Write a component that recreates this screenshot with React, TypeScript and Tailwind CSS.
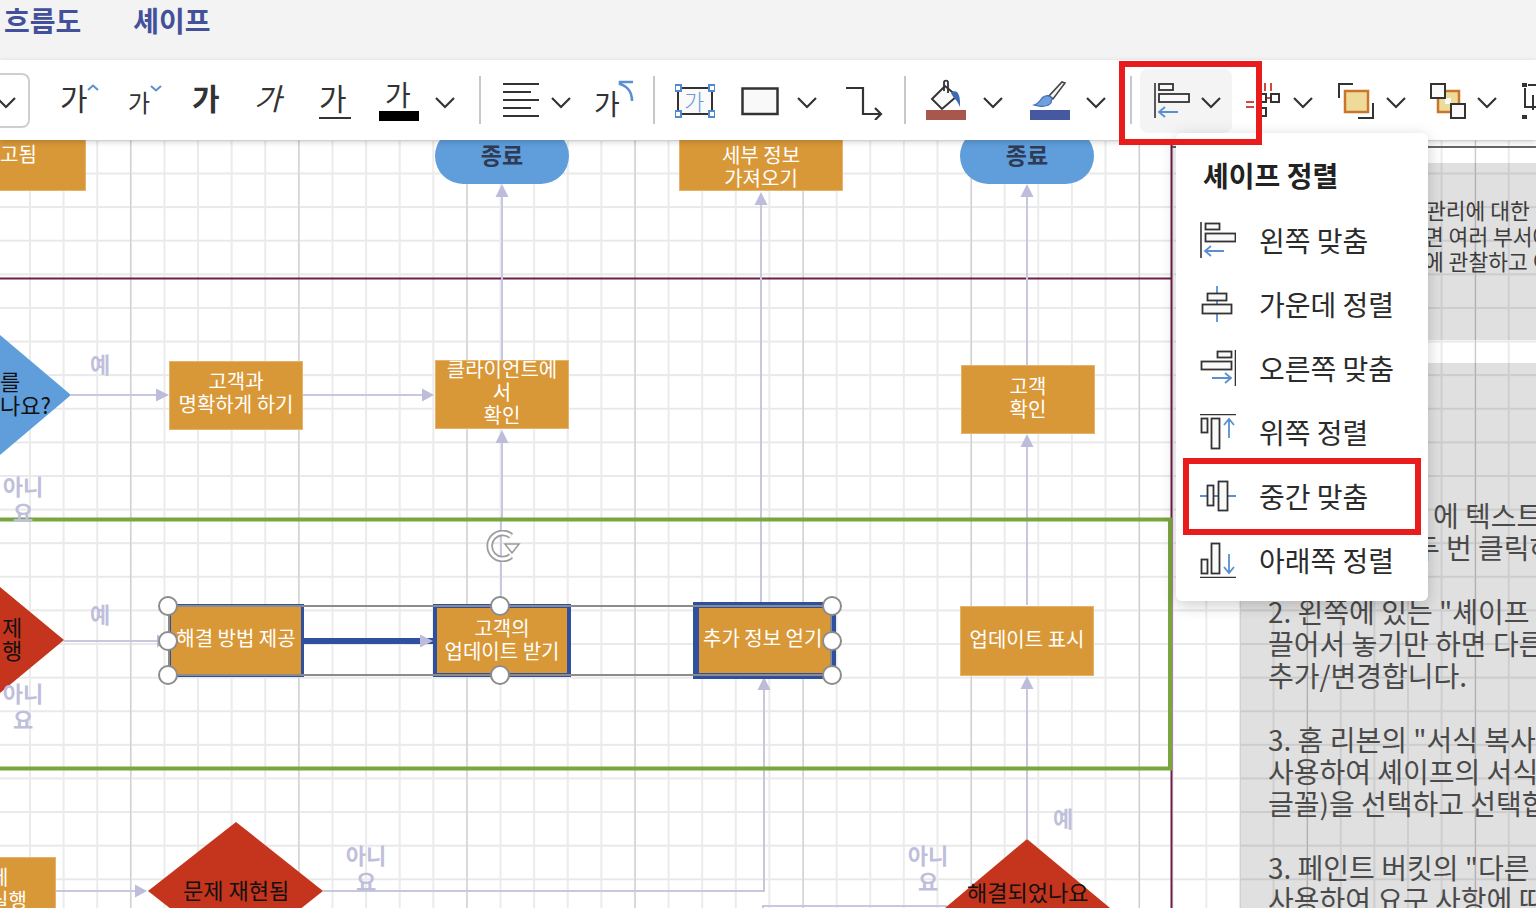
import type { ReactNode } from 'react';

const textDark = 'text-[#333]';

function Chevron({ className = '' }: { className?: string }) {
  return (
    <svg viewBox="0 0 20 40" className={`h-[40px] w-[20px] shrink-0 ${className}`}>
      <polyline points="1,18 10,27 19,18" fill="none" stroke="#333" strokeWidth="2.2" />
    </svg>
  );
}

function Sep({ className = '' }: { className?: string }) {
  return <div className={`h-[48px] w-[2px] shrink-0 bg-[#c8c8c8] ${className}`} />;
}

// edge is the border, plain boxes have a thin light one and selected ones a blue one
function Box({ className, edge = 'border border-[#e6b36c]', children }: { className: string; edge?: string; children: ReactNode }) {
  return (
    <div className={`absolute flex items-center justify-center bg-[#d99837] text-center text-[20px] leading-[23px] text-white ${edge} ${className}`}>
      {children}
    </div>
  );
}

function Handle({ className }: { className: string }) {
  return <div className={`absolute h-[20px] w-[20px] rounded-full border-2 border-[#8c8c8c] bg-white ${className}`} />;
}

function DiagramLabel({ className, children }: { className: string; children: ReactNode }) {
  return <div className={`absolute text-center text-[22px] leading-[26px] font-bold text-[#bfbfdc] ${className}`}>{children}</div>;
}

function MenuItem({ label, children }: { label: string; children: ReactNode }) {
  return (
    <div className="flex h-[64px] items-center gap-[23px] pl-[24px]">
      <svg viewBox="0 0 36 36" className="h-[36px] w-[36px] shrink-0">
        {children}
      </svg>
      <span className="text-[28px] leading-[36px] whitespace-nowrap text-[#2b2b2b]">{label}</span>
    </div>
  );
}

function Toolbar() {
  return (
    <div className="relative z-10 flex h-[80px] shrink-0 items-center overflow-hidden bg-white shadow-[0_2px_6px_rgba(0,0,0,0.18)]">
      <div className="flex h-[55px] w-[30px] shrink-0 items-center justify-end rounded-r-lg border-2 border-l-0 border-[#cfcfcf] pr-[12px]">
        <Chevron />
      </div>

      <div className="relative ml-[32px] h-[40px] w-[36px] shrink-0">
        <span className={`absolute top-[-3px] left-[-2px] text-[30px] leading-[40px] ${textDark}`}>가</span>
        <svg viewBox="0 0 12 8" className="absolute top-[4px] left-[25px] h-[8px] w-[12px]">
          <polyline points="1,6 6,1.5 11,6" fill="none" stroke="#5b8fd0" strokeWidth="2" />
        </svg>
      </div>
      <div className="relative ml-[31px] h-[40px] w-[33px] shrink-0">
        <span className={`absolute top-[2px] left-[-1px] text-[24px] leading-[40px] ${textDark}`}>가</span>
        <svg viewBox="0 0 12 8" className="absolute top-[4px] left-[21px] h-[8px] w-[12px]">
          <polyline points="1,2 6,6.5 11,2" fill="none" stroke="#5b8fd0" strokeWidth="2" />
        </svg>
      </div>
      <div className="relative ml-[30px] h-[40px] w-[30px] shrink-0">
        <span className={`absolute top-[-3px] left-[0px] text-[30px] leading-[40px] font-bold ${textDark}`}>가</span>
      </div>
      <div className="relative ml-[34px] h-[40px] w-[32px] shrink-0">
        <span className={`absolute top-[-3px] left-[-2px] text-[30px] leading-[40px] italic ${textDark}`}>가</span>
      </div>
      <div className="relative ml-[31px] h-[40px] w-[33px] shrink-0">
        <span className={`absolute top-[-3px] left-[0px] text-[30px] leading-[40px] ${textDark}`}>가</span>
        <div className="absolute top-[37px] left-0 h-[2px] w-[32px] bg-[#333]" />
      </div>
      <div className="relative ml-[27px] h-[40px] w-[40px] shrink-0">
        <span className={`absolute top-[-6px] left-[6px] text-[28px] leading-[40px] ${textDark}`}>가</span>
        <div className="absolute top-[31px] left-0 h-[10px] w-[40px] bg-black" />
      </div>
      <Chevron className="ml-[16px]" />
      <Sep className="ml-[24px]" />

      <svg viewBox="503 80 37 40" className="ml-[22px] h-[40px] w-[37px] shrink-0">
        <path d="M503 84H539M503 92H531M503 100H539M503 108H531M503 116H539" stroke="#333" strokeWidth="2" fill="none" />
      </svg>
      <Chevron className="ml-[11px]" />

      <div className="relative ml-[23px] h-[40px] w-[40px] shrink-0">
        <span className={`absolute top-[3px] left-[0px] text-[28px] leading-[40px] ${textDark}`}>가</span>
        <svg viewBox="594 80 40 40" className="absolute inset-0 h-[40px] w-[40px]">
          <path d="M633 82H620V84C627 86 632 92 632 101" fill="none" stroke="#5b8fd0" strokeWidth="2.6" />
        </svg>
      </div>
      <Sep className="ml-[19px]" />

      <div className="relative ml-[20px] h-[40px] w-[40px] shrink-0">
        <svg viewBox="675 80 40 40" className="absolute inset-0 h-[40px] w-[40px]">
          <rect x="678" y="88" width="34" height="26" fill="#fafafa" stroke="#333" strokeWidth="2" />
          <path d="M675 85h6v6h-6zM709 85h6v6h-6zM675 111h6v6h-6zM709 111h6v6h-6z" fill="#fff" stroke="#4f8ad0" strokeWidth="2" />
        </svg>
        <span className="absolute top-0 left-[9px] text-[22px] leading-[40px] font-light text-[#6a9ad6]">가</span>
      </div>
      <svg viewBox="741 80 38 40" className="ml-[26px] h-[40px] w-[38px] shrink-0">
        <rect x="742.5" y="88.5" width="35" height="25.5" fill="#f9f9f9" stroke="#333" strokeWidth="2.5" />
      </svg>
      <Chevron className="ml-[18px]" />
      <svg viewBox="845 80 38 40" className="ml-[28px] h-[40px] w-[38px] shrink-0">
        <path d="M846 88H863V114H881M875 108L881 114L875 120" fill="none" stroke="#333" strokeWidth="2.2" />
      </svg>
      <Sep className="ml-[21px]" />

      <svg viewBox="926 80 40 42" className="ml-[20px] h-[42px] w-[40px] shrink-0">
        <path d="M932 100L945 87L957 97L942 110Z" fill="#fbfbfb" stroke="#333" strokeWidth="2" />
        <path d="M944 92V83.5C944 81 948 81 948 83.5V94" fill="none" stroke="#333" strokeWidth="1.8" />
        <path d="M951 94C955 90 961 92 960 108C958 104 957 102 955 100C953 98 952 96 951 94Z" fill="#3f6bb5" />
        <rect x="926" y="111" width="40" height="10" fill="#a8584a" />
      </svg>
      <Chevron className="ml-[17px]" />
      <svg viewBox="1030 80 40 42" className="ml-[27px] h-[42px] w-[40px] shrink-0">
        <path d="M1065 84L1062 83L1049 97L1053 100Z" fill="#f6f6f6" stroke="#444" strokeWidth="1.6" />
        <path d="M1052 99C1048 95 1044 97 1042 99C1040 102 1038 105 1034 106C1040 108 1048 108 1051 104Z" fill="#6f9fdc" stroke="#3f6bb5" strokeWidth="1.2" />
        <rect x="1030" y="111" width="40" height="10" fill="#46589f" />
      </svg>
      <Chevron className="ml-[16px]" />
      <Sep className="ml-[24px]" />

      <div className="mt-[2px] ml-[8px] flex h-[64px] w-[92px] shrink-0 items-center gap-[10px] rounded-lg bg-[#f4f4f4] pl-[14px]">
        <svg viewBox="1154 80 37 40" className="mb-[2px] h-[40px] w-[37px] shrink-0">
          <path d="M1155 83V118" stroke="#333" strokeWidth="1.6" fill="none" />
          <rect x="1159" y="84" width="14" height="6" fill="#f9f9f9" stroke="#333" strokeWidth="1.8" />
          <rect x="1159" y="94" width="30" height="8" fill="#f9f9f9" stroke="#333" strokeWidth="1.8" />
          <path d="M1178 112H1159M1165 107L1159 112L1165 117" fill="none" stroke="#5b8fd0" strokeWidth="1.8" />
        </svg>
        <Chevron className="mb-[2px]" />
      </div>

      <svg viewBox="1246 80 35 40" className="ml-[14px] h-[40px] w-[35px] shrink-0">
        <path d="M1246 102H1254M1246 107H1254M1265 83V91M1271 83V91M1266 98H1271" fill="none" stroke="#cc4a40" strokeWidth="2" />
        <rect x="1261" y="94" width="5" height="8" fill="none" stroke="#333" strokeWidth="2" />
        <rect x="1271" y="94" width="8" height="8" fill="none" stroke="#333" strokeWidth="2" />
        <rect x="1261" y="108" width="5" height="8" fill="none" stroke="#333" strokeWidth="2" />
      </svg>
      <Chevron className="ml-[12px]" />
      <svg viewBox="1338 80 36 40" className="ml-[25px] h-[40px] w-[36px] shrink-0">
        <rect x="1345" y="91" width="23" height="21" fill="#eedb9a" stroke="#c8762c" strokeWidth="2.5" />
        <path d="M1353 84H1339V98M1373 103V118H1358" fill="none" stroke="#333" strokeWidth="2" />
      </svg>
      <Chevron className="ml-[12px]" />
      <svg viewBox="1430 80 37 40" className="ml-[24px] h-[40px] w-[37px] shrink-0">
        <rect x="1438" y="91" width="21" height="21" fill="#eedb9a" stroke="#c8762c" strokeWidth="2.5" />
        <rect x="1445" y="98" width="6" height="6" fill="#fafafa" />
        <rect x="1431" y="84" width="14" height="14" fill="#f9f9f9" stroke="#333" strokeWidth="2" />
        <rect x="1451" y="104" width="14" height="14" fill="#f9f9f9" stroke="#333" strokeWidth="2" />
      </svg>
      <Chevron className="ml-[10px]" />
      <svg viewBox="1522 80 14 40" className="ml-[25px] h-[40px] w-[14px] shrink-0">
        <path d="M1522 83h5v4h-5zM1522 115h5v4h-5z" fill="#333" />
        <path d="M1528 85H1536M1525 88V107H1536M1533 95V110" fill="none" stroke="#333" strokeWidth="2" />
      </svg>
    </div>
  );
}

function Diagram() {
  return (
    <>
      <svg viewBox="0 140 1536 768" className="absolute inset-0 h-[768px] w-[1536px]">
        <path d="M1172 147H1536" stroke="#666" strokeWidth="2" />
        <path d="M0 278.5H1171.5M1171.5 140V908" stroke="#6b1e4a" strokeWidth="2" fill="none" />

        <g stroke="#c7c7de" strokeWidth="2" fill="none">
          <path d="M71 395H158M303 395H424M502 360V196M502 518V442M501 606V520" />
          <path d="M1027 365V196M1027 605V446M1027 839V688M761 605V204" />
          <path d="M64 641H160M56 891H136M323 891H764V689M763 908V906H947" />
        </g>
        <g fill="#bdbddb">
          <path d="M169 395L156 388.5V401.5Z" />
          <path d="M434 395L422 388.5V401.5Z" />
          <path d="M502 184L495.5 197H508.5Z" />
          <path d="M502 430L495.5 443H508.5Z" />
          <path d="M1027 184L1020.5 197H1033.5Z" />
          <path d="M1027 434L1020.5 447H1033.5Z" />
          <path d="M1027 676L1020.5 689H1033.5Z" />
          <path d="M761 192L754.5 205H767.5Z" />
          <path d="M764 677L757.5 690H770.5Z" />
          <path d="M147 891L135 884.5V897.5Z" />
          <path d="M169 641L157 634.5V647.5Z" />
        </g>

        <path d="M-60 395L0 335L71 395L0 455Z" fill="#5f9edb" />
        <path d="M-60 640L0 587L64 640L0 693Z" fill="#c5341d" />
        <path d="M236 822L323 891L236 960L148 891Z" fill="#c5341d" />
        <path d="M1027 839L1110 908H945Z" fill="#c5341d" />

        <rect x="-10" y="519.5" width="1180" height="249" fill="none" stroke="#7aa53f" strokeWidth="4" />
        <rect x="304" y="638" width="129" height="6" fill="#2f4f9f" />
        <path d="M433 641L420 634.5V647.5Z" fill="#bdbddb" />
      </svg>

      <div className="absolute top-[-12px] left-[435px] flex h-[56px] w-[134px] items-center justify-center rounded-[28px] bg-[#5f9edb] pb-[4px] text-[23px] font-bold text-[#2f3a55]">종료</div>
      <div className="absolute top-[-12px] left-[960px] flex h-[56px] w-[134px] items-center justify-center rounded-[28px] bg-[#5f9edb] pb-[4px] text-[23px] font-bold text-[#2f3a55]">종료</div>

      <Box className="top-[-20px] left-[-10px] h-[71px] w-[96px]">
        <span className="absolute top-[21px] left-[9px]">고됨</span>
      </Box>
      <Box className="top-[-20px] left-[679px] h-[71px] w-[164px] pt-[20px]">
        <span>세부 정보<br />가져오기</span>
      </Box>
      <Box className="top-[221px] left-[169px] h-[69px] w-[134px] pb-[7px]">
        <span>고객과<br />명확하게 하기</span>
      </Box>
      <Box className="top-[220px] left-[435px] h-[69px] w-[134px] pb-[6px]">
        <span>클라이언트에<br />서<br />확인</span>
      </Box>
      <Box className="top-[225px] left-[961px] h-[69px] w-[134px] pb-[6px]">
        <span>고객<br />확인</span>
      </Box>
      <Box className="top-[466px] left-[960px] h-[70px] w-[134px] pb-[6px]">
        <span>업데이트 표시</span>
      </Box>
      <Box className="top-[717px] left-[-10px] h-[70px] w-[66px]">
        <span className="absolute top-[7px] left-[-1px] whitespace-nowrap text-left">제<br />실행</span>
      </Box>

      <Box edge="border-[3px] border-[#2f4f9f]" className="top-[464px] left-[168px] h-[73px] w-[136px] pb-[6px]">
        <span className="whitespace-nowrap">해결 방법 제공</span>
      </Box>
      <Box edge="border-[4px] border-[#2f4f9f]" className="top-[464px] left-[433px] h-[73px] w-[138px] pb-[3px]">
        <span className="whitespace-nowrap">고객의<br />업데이트 받기</span>
      </Box>
      <Box edge="border-[6px] border-[#2f4f9f]" className="top-[462px] left-[693px] h-[77px] w-[143px]">
        <span className="absolute top-[18px] left-[4px] whitespace-nowrap">추가 정보 얻기</span>
      </Box>

      {/* texts that sit on the clipped diamonds */}
      <div className="absolute top-[228px] left-[0px] text-[22px] leading-[24px] text-[#111]">를<br />나요?</div>
      <div className="absolute top-[475px] left-[2px] text-[22px] leading-[23px] text-[#111]">제<br />행</div>
      <div className="absolute top-[735px] left-[183px] text-[22px] leading-[28px] whitespace-nowrap text-[#111]">문제 재현됨</div>
      <div className="absolute top-[737px] left-[967px] text-[22px] leading-[28px] whitespace-nowrap text-[#111]">해결되었나요</div>

      <DiagramLabel className="top-[210px] left-[90px]">예</DiagramLabel>
      <DiagramLabel className="top-[460px] left-[90px]">예</DiagramLabel>
      <DiagramLabel className="top-[664px] left-[1053px]">예</DiagramLabel>
      <DiagramLabel className="top-[332px] left-[2px] w-[42px]">아니<br />요</DiagramLabel>
      <DiagramLabel className="top-[539px] left-[2px] w-[42px]">아니<br />요</DiagramLabel>
      <DiagramLabel className="top-[701px] left-[345px] w-[42px]">아니<br />요</DiagramLabel>
      <DiagramLabel className="top-[701px] left-[907px] w-[42px]">아니<br />요</DiagramLabel>

      {/* selection frame */}
      <div className="absolute top-[465px] left-[168px] h-[71px] w-[664px] border-2 border-[#8c8c8c]" />
      <svg viewBox="484 530 38 32" className="absolute top-[390px] left-[484px] h-[32px] w-[38px]">
        <path d="M511 536A13 13 0 1 0 511 556" fill="none" stroke="#9c9c9c" strokeWidth="6.5" />
        <path d="M511 536A13 13 0 1 0 511 556" fill="none" stroke="#fff" strokeWidth="3" />
        <path d="M505 544H519L512 553Z" fill="#fff" stroke="#9c9c9c" strokeWidth="1.6" />
      </svg>
      <Handle className="top-[456px] left-[158px]" />
      <Handle className="top-[491px] left-[158px]" />
      <Handle className="top-[525px] left-[158px]" />
      <Handle className="top-[456px] left-[490px]" />
      <Handle className="top-[525px] left-[490px]" />
      <Handle className="top-[456px] left-[822px]" />
      <Handle className="top-[491px] left-[822px]" />
      <Handle className="top-[525px] left-[822px]" />
    </>
  );
}

function SidePanels() {
  return (
    <>
      <div className="absolute top-[23px] left-[1240px] h-[177px] w-[296px] overflow-hidden bg-black/[0.12] pt-[34px] text-[21.5px] leading-[25.5px] whitespace-nowrap text-[#3c3c3c]">
        <div className="pl-[186px]">관리에 대한</div>
        <div className="pl-[184px]">면 여러 부서에</div>
        <div className="pl-[184px]">에 관찰하고 이</div>
      </div>
      <div className="absolute top-[223px] left-[1240px] h-[545px] w-[296px] overflow-hidden bg-black/[0.12] pt-[136px] pl-[28px] text-[28px] leading-[32px] whitespace-nowrap text-[#4a4a4a]">
        <div className="pl-[165px]">에 텍스트</div>
        <div className="pl-[146px]">두 번 클릭하</div>
        <div className="h-[32px]" />
        <div>2. 왼쪽에 있는 "셰이프</div>
        <div>끌어서 놓기만 하면 다른</div>
        <div>추가/변경합니다.</div>
        <div className="h-[32px]" />
        <div>3. 홈 리본의 "서식 복사</div>
        <div>사용하여 셰이프의 서식</div>
        <div>글꼴)을 선택하고 선택합</div>
        <div className="h-[32px]" />
        <div>3. 페인트 버킷의 "다른</div>
        <div>사용하여 요구 사항에 따</div>
      </div>
    </>
  );
}

function AlignMenu() {
  return (
    <div className="absolute top-[133px] left-[1176px] z-30 h-[468px] w-[252px] rounded-md bg-white pt-[22px] shadow-[0_4px_16px_rgba(0,0,0,0.2)]">
      <div className="mb-[13px] pl-[27px] text-[28px] leading-[40px] font-bold whitespace-nowrap text-[#222]">셰이프 정렬</div>
      <MenuItem label="왼쪽 맞춤">
        <path d="M1 0V36" stroke="#333" strokeWidth="1.6" fill="none" />
        <rect x="5.5" y="1.5" width="14" height="6" fill="#f9f9f9" stroke="#333" strokeWidth="1.8" />
        <rect x="5.5" y="11.5" width="30" height="8" fill="#f9f9f9" stroke="#333" strokeWidth="1.8" />
        <path d="M24 29H5M11 24L5 29L11 34" fill="none" stroke="#5b8fd0" strokeWidth="1.8" />
      </MenuItem>
      <MenuItem label="가운데 정렬">
        <path d="M17 0V36" stroke="#5b8fd0" strokeWidth="1.8" fill="none" />
        <rect x="7.5" y="7.5" width="19" height="7" fill="#f9f9f9" stroke="#333" strokeWidth="1.8" />
        <rect x="2.5" y="18.5" width="29" height="9" fill="#f9f9f9" stroke="#333" strokeWidth="1.8" />
      </MenuItem>
      <MenuItem label="오른쪽 맞춤">
        <path d="M35.5 0V36" stroke="#333" strokeWidth="1.6" fill="none" />
        <rect x="17.5" y="1.5" width="14" height="6" fill="#f9f9f9" stroke="#333" strokeWidth="1.8" />
        <rect x="1.5" y="11.5" width="30" height="8" fill="#f9f9f9" stroke="#333" strokeWidth="1.8" />
        <path d="M12 28H31M25 23L31 28L25 33" fill="none" stroke="#5b8fd0" strokeWidth="1.8" />
      </MenuItem>
      <MenuItem label="위쪽 정렬">
        <path d="M0 0.5H36" stroke="#333" strokeWidth="1.6" fill="none" />
        <rect x="1.5" y="4.5" width="6" height="14" fill="#f9f9f9" stroke="#333" strokeWidth="1.8" />
        <rect x="11.5" y="4.5" width="8" height="30" fill="#f9f9f9" stroke="#333" strokeWidth="1.8" />
        <path d="M29 24V5M24 11L29 5L34 11" fill="none" stroke="#5b8fd0" strokeWidth="1.8" />
      </MenuItem>
      <MenuItem label="중간 맞춤">
        <path d="M0 18H36" stroke="#5b8fd0" strokeWidth="1.8" fill="none" />
        <rect x="7.5" y="7.5" width="6" height="20" fill="#f9f9f9" stroke="#333" strokeWidth="1.8" />
        <rect x="18.5" y="3.5" width="9" height="29" fill="#f9f9f9" stroke="#333" strokeWidth="1.8" />
      </MenuItem>
      <MenuItem label="아래쪽 정렬">
        <path d="M0 35.5H36" stroke="#333" strokeWidth="1.6" fill="none" />
        <rect x="1.5" y="17.5" width="6" height="14" fill="#f9f9f9" stroke="#333" strokeWidth="1.8" />
        <rect x="11.5" y="1.5" width="8" height="30" fill="#f9f9f9" stroke="#333" strokeWidth="1.8" />
        <path d="M29 12V31M24 25L29 31L34 25" fill="none" stroke="#5b8fd0" strokeWidth="1.8" />
      </MenuItem>
    </div>
  );
}

export default function App() {
  return (
    <div className="relative flex h-[908px] w-[1536px] flex-col overflow-hidden bg-white font-['Noto_Sans_CJK_KR','Liberation_Sans',sans-serif]">
      {/* Ribbon tabs */}
      <div className="flex h-[60px] shrink-0 gap-[52px] bg-[#f3f3f3] pl-[4px] text-[28px] leading-[40px] font-bold text-[#43519a]">
        <span>흐름도</span>
        <span>셰이프</span>
      </div>

      <Toolbar />

      {/* Drawing canvas */}
      <div className="relative flex-1 overflow-hidden bg-white bg-[linear-gradient(to_right,#c8c8c8_1px,transparent_1px),linear-gradient(to_right,#ebebeb_2px,transparent_2px),linear-gradient(to_bottom,#e9e9e9_2px,transparent_2px)] bg-[size:168.1px_100%,33.62px_100%,100%_33.62px] bg-[position:130.3px_0,29px_0,0_32.5px]">
        <SidePanels />
        <Diagram />
      </div>

      <AlignMenu />

      {/* Red callouts */}
      <div className="pointer-events-none absolute top-[61px] left-[1119px] z-40 h-[84px] w-[143px] border-[6px] border-[#e81c1c]" />
      <div className="pointer-events-none absolute top-[458px] left-[1183px] z-40 h-[77px] w-[238px] border-[6px] border-[#e81c1c]" />
    </div>
  );
}
